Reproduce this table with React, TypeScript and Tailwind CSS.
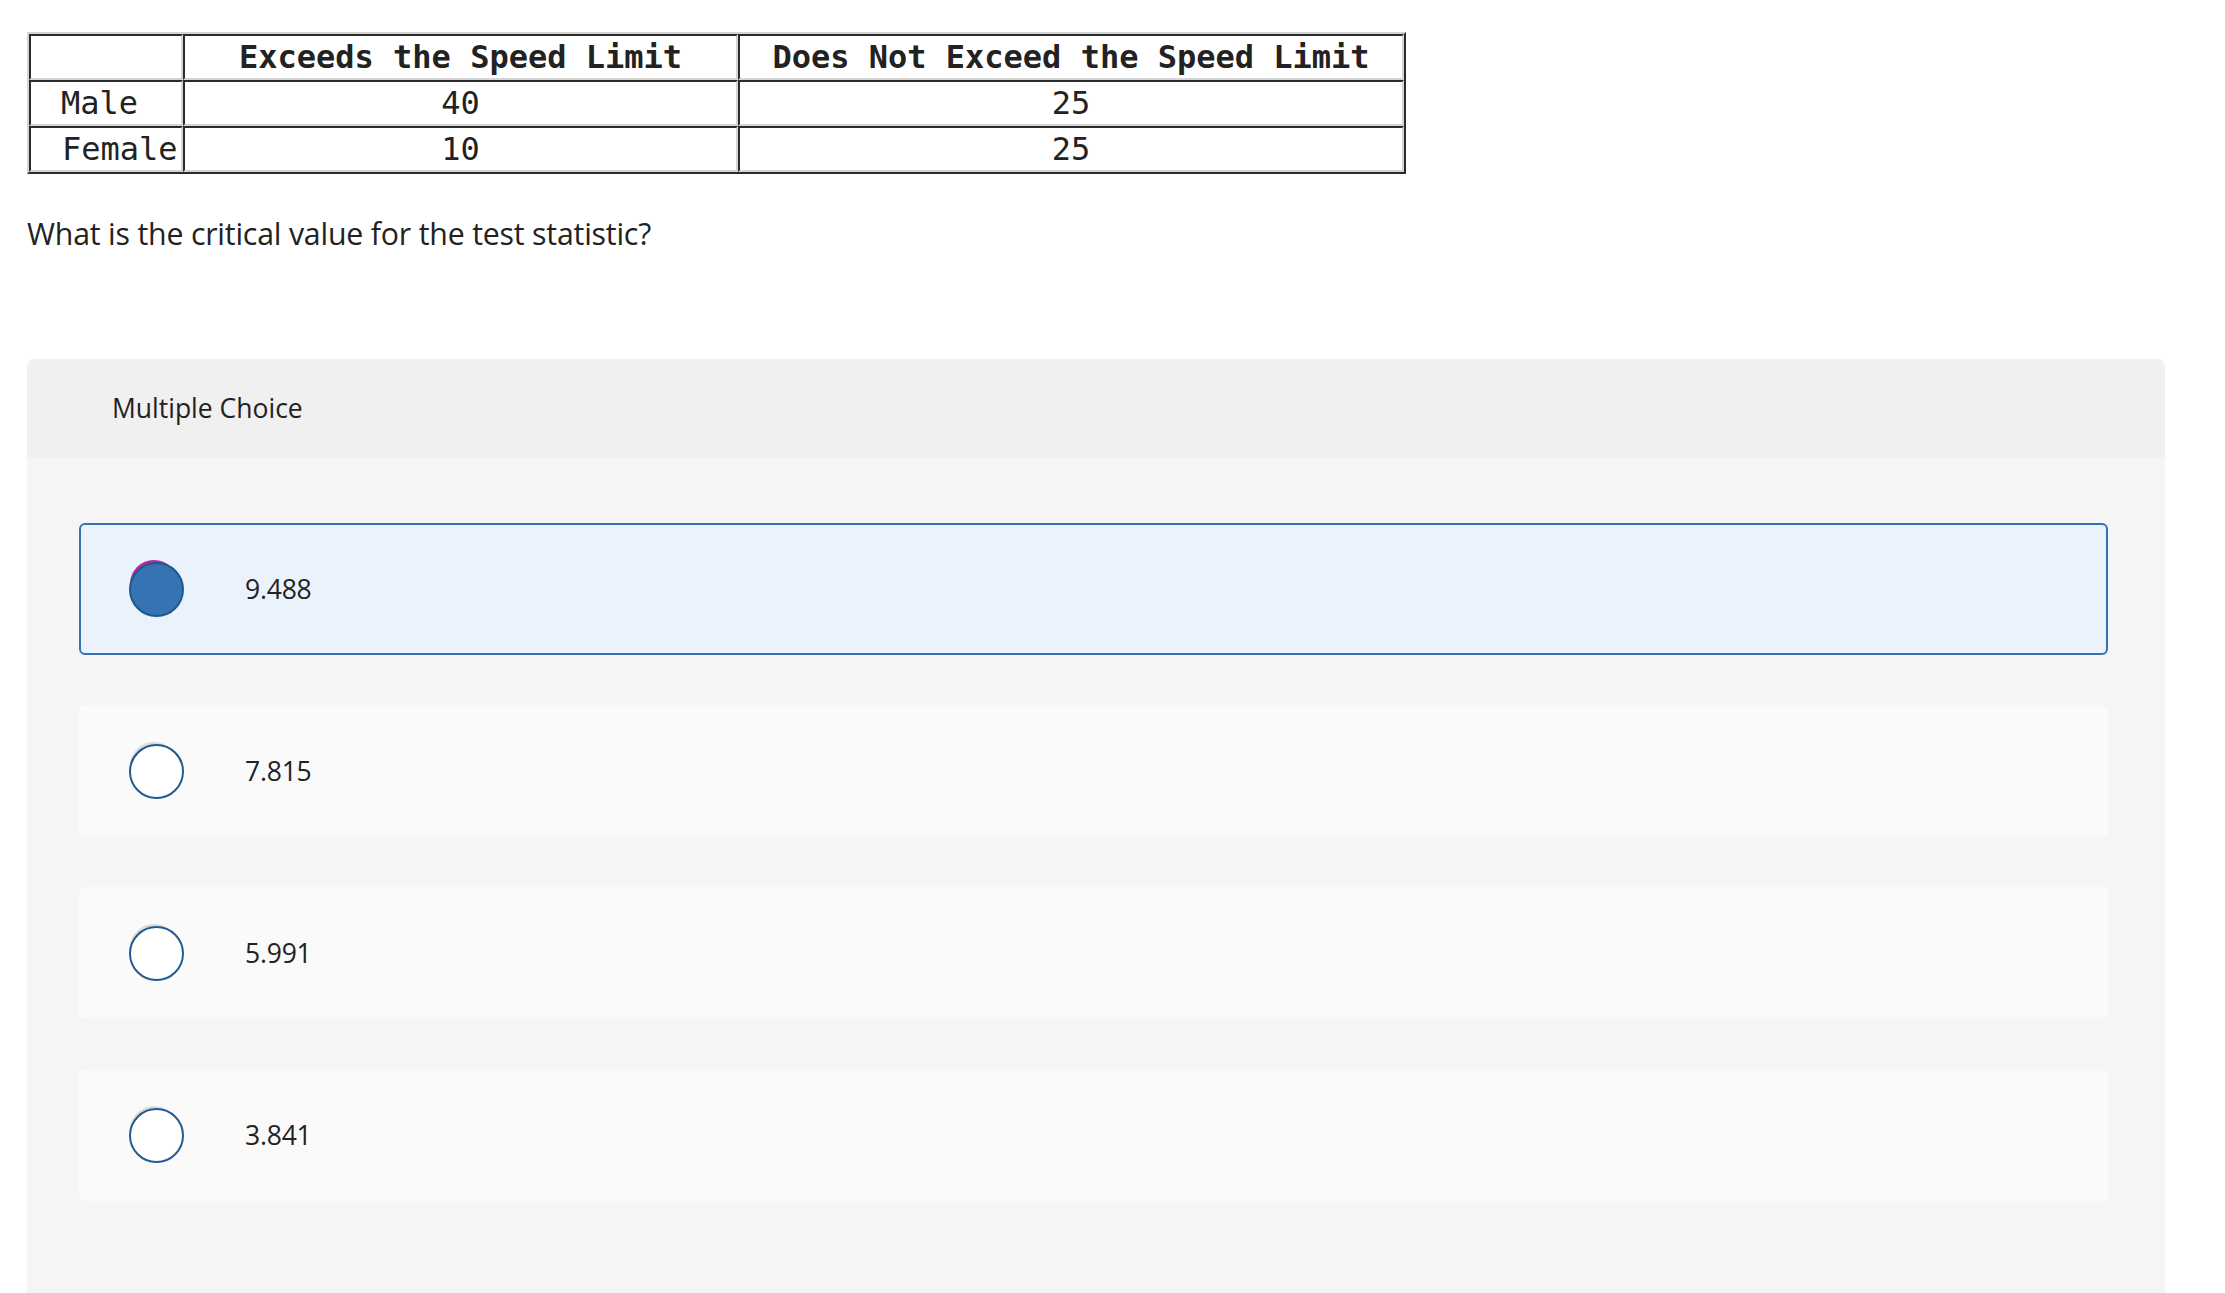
import React from "react";

const sans = { fontFamily: "'Open Sans', Lato, sans-serif" } as React.CSSProperties;

function Cell({ children, className = "" }: { children?: React.ReactNode; className?: string }) {
  return (
    <td
      className={
        "h-[46px] p-0 border-2 border-t-[#2b2b2b] border-l-[#2b2b2b] border-b-[#d4d4d4] border-r-[#d4d4d4] leading-[42px] align-middle " +
        className
      }
    >
      {children}
    </td>
  );
}

function Radio({ selected }: { selected: boolean }) {
  return (
    <div className="relative w-[55px] h-[55px] shrink-0">
      <div
        className={
          "absolute left-[1px] top-[-2px] w-[48px] h-[48px] rounded-full " +
          (selected ? "bg-[#b62a9f]" : "bg-[#dcdcdc]")
        }
      />
      <div
        className={
          "absolute inset-0 rounded-full border-2 " +
          (selected ? "bg-[#3673b3] border-[#1e5a8b]" : "bg-white border-[#1f5c95]")
        }
      />
    </div>
  );
}

function Option({ label, selected }: { label: string; selected?: boolean }) {
  return (
    <div
      className={
        "h-[132px] rounded-[6px] border-2 flex items-center pl-[48px] " +
        (selected ? "bg-[#eaf2fb] border-[#3572b5]" : "bg-[#fafafa] border-transparent")
      }
    >
      <Radio selected={!!selected} />
      <span className="ml-[61px] text-[26.5px] text-[#222] leading-none tracking-[-0.2px]" style={sans}>
        {label}
      </span>
    </div>
  );
}

export default function App() {
  return (
    <div className="bg-white min-h-[1293px] w-[2225px] overflow-hidden pl-[27px] pt-[32px]">
      <table
        className="border-separate border-spacing-0 border-2 border-t-[#d4d4d4] border-l-[#d4d4d4] border-b-[#2b2b2b] border-r-[#2b2b2b] text-[32px] text-[#222]"
        style={{ fontFamily: "'DejaVu Sans Mono', monospace" }}
      >
        <tbody>
          <tr>
            <Cell className="w-[154px]" />
            <Cell className="w-[555px] text-center font-bold">Exceeds the Speed Limit</Cell>
            <Cell className="w-[666px] text-center font-bold">Does Not Exceed the Speed Limit</Cell>
          </tr>
          <tr>
            <Cell className="pl-[30px]">Male</Cell>
            <Cell className="text-center">40</Cell>
            <Cell className="text-center">25</Cell>
          </tr>
          <tr>
            <Cell className="pl-[31px]">Female</Cell>
            <Cell className="text-center">10</Cell>
            <Cell className="text-center">25</Cell>
          </tr>
        </tbody>
      </table>

      <p className="mt-[42px] text-[30.3px] leading-[36px] text-[#222] tracking-[-0.2px]" style={sans}>
        What is the critical value for the test statistic?
      </p>

      <div className="mt-[107px] w-[2138px] rounded-t-[8px] overflow-hidden bg-[#f5f5f5] h-[935px]">
        <div className="h-[99px] bg-[#f0f0f0] flex items-center pl-[85px]">
          <span className="text-[26.5px] text-[#222]" style={sans}>
            Multiple Choice
          </span>
        </div>
        <div className="pt-[65px] pl-[52px] pr-[57px] flex flex-col gap-[50px]">
          <Option label="9.488" selected />
          <Option label="7.815" />
          <Option label="5.991" />
          <Option label="3.841" />
        </div>
      </div>
    </div>
  );
}
